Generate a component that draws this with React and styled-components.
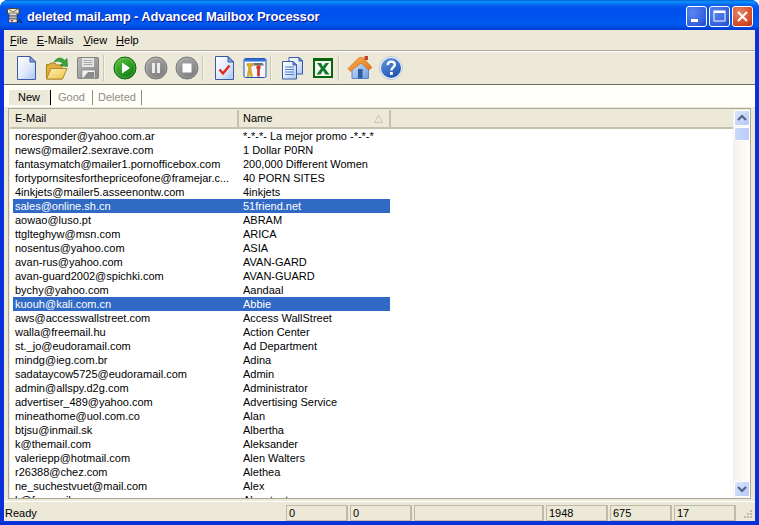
import React from 'react';
import styled, { createGlobalStyle } from 'styled-components';

const Global = createGlobalStyle`
  html, body { margin: 0; padding: 0; background: #fff; overflow: hidden; }
  * { box-sizing: border-box; }
`;

const UI = `"Liberation Sans", Arial, sans-serif`;

const Win = styled.div`
  width: 759px; height: 525px; display: flex; flex-direction: column;
  border-radius: 8px 8px 0 0; overflow: hidden; font: 11px/14px ${UI}; color: #000;
  background: #0831d9;
`;
const TitleBar = styled.div`
  height: 30px; flex: none; display: flex; align-items: center; padding: 0 6px 0 6px;
  background: linear-gradient(180deg, #0a5fd8 0, #0997ff 2px, #0b6cf0 4px, #0053ee 8px, #0050ee 16px, #0058f2 22px, #0055e6 26px, #003dd7 29px, #0a3cc8 30px);
`;
const TitleIcon = styled.svg` width: 17px; height: 17px; flex: none; margin: 1px 4px 0 0; `;
const TitleText = styled.div`
  flex: 1; color: #fff; font: bold 13px/16px "Liberation Sans", sans-serif; letter-spacing: -0.12px;
  text-shadow: 1px 1px 0 #0f1089; margin-top: 4px;
`;
const CtlRow = styled.div` display: flex; gap: 2px; margin-top: 2px; `;
const Ctl = styled.div`
  width: 21px; height: 21px; border: 1px solid #fff; border-radius: 3px; display: flex; align-items: center; justify-content: center;
  background: ${p => p.$close
    ? 'radial-gradient(circle at 35% 30%, #e58a6c 0, #d9562f 55%, #bf3010 100%)'
    : 'radial-gradient(circle at 30% 30%, #5a86ee 0, #3a68e2 55%, #2148c8 100%)'};
`;
const Body = styled.div`
  flex: 1; min-height: 0; display: flex; flex-direction: column; background: #ece9d8;
  margin: 0 4px 4px 4px;
`;
const MenuBar = styled.div`
  flex: none; display: flex; padding: 0 0 0 1px; align-items: center;
  border-bottom: 1px solid #aca899; height: 21px;
`;
const MenuItem = styled.div` padding: 0 ${p => p.$pad}px 0 5px; & u { text-decoration: underline; } `;
const Toolbar = styled.div`
  height: 34px; flex: none; display: flex; align-items: center; padding: 0 0 1px 6px;
  border-top: 1px solid #fff; border-bottom: 1px solid #716f64;
`;
const ToolBtn = styled.div` width: 31px; height: 26px; display: flex; align-items: center; justify-content: center; flex: none; `;
const Sep = styled.div` width: 2px; height: 26px; background: #c9c6b5; border-right: 1px solid #f6f5ee; margin-right: 4px; flex: none; `;
const TabStrip = styled.div`
  height: 22px; flex: none; background: #fffff8; display: flex; align-items: flex-end; padding: 0 0 2px 5px;
  border-top: 1px solid #fff;
`;
const Tab = styled.div`
  height: 15px; line-height: 15px; display: flex; align-items: center; padding-left: ${p => p.$pl}px;
  width: ${p => p.$w}px; background: ${p => p.$active ? '#ece9d8' : 'transparent'};
  color: ${p => p.$active ? '#000' : '#8e8e84'};
  border-right: 1px solid ${p => p.$active ? '#000' : '#8e8e84'};
`;
const Frame = styled.div`
  flex: 1; min-height: 0; margin: 1px 4px 0 4px; border: 1px solid #aca899;
  padding: 1px 0 0 1px; display: flex; background: #ece9d8;
`;
const ListCol = styled.div` flex: 1; min-width: 0; display: flex; flex-direction: column; background: #fff; `;
const Header = styled.div`
  height: 19px; flex: none; display: flex; background: #ece9d8; border-bottom: 2px solid #c4c1b0;
`;
const HeadCell = styled.div`
  position: relative; width: ${p => p.$w}px; padding-left: ${p => p.$pl}px; line-height: 17px; flex: none;
  border-right: 2px solid #c4c1b0;
`;
const SortMark = styled.svg` position: absolute; right: 6px; top: 4px; width: 9px; height: 9px; `;
const Rows = styled.div` flex: 1; min-height: 0; overflow: hidden; padding: 0 0 0 3px; `;
const Row = styled.div`
  display: flex; width: 377px; height: 14px; line-height: 14px; white-space: nowrap;
  background: ${p => p.$sel ? '#316ac5' : 'transparent'}; color: ${p => p.$sel ? '#fff' : '#000'};
`;
const Email = styled.div` width: 226px; padding-left: 2px; flex: none; overflow: hidden; `;
const Name = styled.div` width: 151px; padding-left: 4px; flex: none; overflow: hidden; `;
const Scroll = styled.div`
  width: 17px; flex: none; display: flex; flex-direction: column; padding-bottom: 1px;
  background: linear-gradient(90deg, #f3f1ec 0, #fefefb 100%);
`;
const ScrollBtn = styled.div`
  width: 16px; height: 16px; flex: none; border: 1px solid #fff; border-radius: 2px; background: linear-gradient(135deg, #dbe5fb, #b5c8f7);
  display: flex; align-items: center; justify-content: center; margin-left: 1px;
`;
const Thumb = styled.div`
  width: 16px; height: 14px; margin: 1px 0 0 1px; border: 1px solid #fff; border-radius: 2px; flex: none;
  background: linear-gradient(90deg, #c9d8fb, #b8ccf8);
`;
const Spacer = styled.div` flex: 1; `;
const Status = styled.div`
  height: 20px; flex: none; margin-top: 2px; display: flex; align-items: flex-start; padding-top: 3px; padding-left: 1px; border-top: 1px solid #fff;
`;
const Ready = styled.div` flex: 1; line-height: 15px; padding-top: 1px; `;
const Pane = styled.div`
  width: ${p => p.$w}px; height: 16px; margin-right: 2px; border: 1px solid #bdbaa8; border-right-width: 2px; padding-left: 2px; line-height: 14px; flex: none;
`;
const Grip = styled.svg` width: 17px; height: 16px; flex: none; `;

const data = [
  ['noresponder@yahoo.com.ar', '*-*-*- La mejor promo -*-*-*'],
  ['news@mailer2.sexrave.com', '1 Dollar P0RN'],
  ['fantasymatch@mailer1.pornofficebox.com', '200,000 Different Women'],
  ['fortypornsitesforthepriceofone@framejar.c...', '40 PORN SITES'],
  ['4inkjets@mailer5.asseenontw.com', '4inkjets'],
  ['sales@online.sh.cn', '51friend.net', 1],
  ['aowao@luso.pt', 'ABRAM'],
  ['ttglteghyw@msn.com', 'ARICA'],
  ['nosentus@yahoo.com', 'ASIA'],
  ['avan-rus@yahoo.com', 'AVAN-GARD'],
  ['avan-guard2002@spichki.com', 'AVAN-GUARD'],
  ['bychy@yahoo.com', 'Aandaal'],
  ['kuouh@kali.com.cn', 'Abbie', 1],
  ['aws@accesswallstreet.com', 'Access WallStreet'],
  ['walla@freemail.hu', 'Action Center'],
  ['st._jo@eudoramail.com', 'Ad Department'],
  ['mindg@ieg.com.br', 'Adina'],
  ['sadataycow5725@eudoramail.com', 'Admin'],
  ['admin@allspy.d2g.com', 'Administrator'],
  ['advertiser_489@yahoo.com', 'Advertising Service'],
  ['mineathome@uol.com.co', 'Alan'],
  ['btjsu@inmail.sk', 'Albertha'],
  ['k@themail.com', 'Aleksander'],
  ['valeriepp@hotmail.com', 'Alen Walters'],
  ['r26388@chez.com', 'Alethea'],
  ['ne_suchestvuet@mail.com', 'Alex'],
  ['k@freemail.com', 'Alexstant'],
];

const Ico = styled.svg` width: 26px; height: 26px; display: block; overflow: visible; `;

const Defs = () => (
  <svg width="0" height="0" style={{ position: 'absolute' }}>
    <defs>
      <linearGradient id="page" x1="0" y1="0" x2="1" y2="1"><stop offset="0" stopColor="#fff" /><stop offset="0.55" stopColor="#dfe9fb" /><stop offset="1" stopColor="#a9c4f2" /></linearGradient>
      <linearGradient id="green" x1="0.2" y1="0" x2="0.8" y2="1"><stop offset="0" stopColor="#58c03a" /><stop offset="1" stopColor="#0c7a10" /></linearGradient>
      <linearGradient id="gray" x1="0.2" y1="0" x2="0.8" y2="1"><stop offset="0" stopColor="#a8a8a8" /><stop offset="1" stopColor="#7a7a7a" /></linearGradient>
      <linearGradient id="blue" x1="0.2" y1="0" x2="0.8" y2="1"><stop offset="0" stopColor="#5d90dc" /><stop offset="1" stopColor="#1c4fae" /></linearGradient>
      <linearGradient id="folder" x1="0" y1="0" x2="1" y2="1"><stop offset="0" stopColor="#fff3b8" /><stop offset="1" stopColor="#f0c044" /></linearGradient>
      <linearGradient id="floppy" x1="0" y1="0" x2="1" y2="1"><stop offset="0" stopColor="#b8b8b8" /><stop offset="1" stopColor="#8a8a8a" /></linearGradient>
      <linearGradient id="roof" x1="0" y1="0" x2="1" y2="1"><stop offset="0" stopColor="#f7b24a" /><stop offset="1" stopColor="#e5701c" /></linearGradient>
      <linearGradient id="wall" x1="0" y1="0" x2="1" y2="1"><stop offset="0" stopColor="#d6e6fa" /><stop offset="1" stopColor="#6e9ddf" /></linearGradient>
    </defs>
  </svg>
);

const Page = () => (
  <>
    <path d="M4.5 1.5H17L22.5 7V24.5H4.5Z" fill="url(#page)" stroke="#3a5aa8" />
    <path d="M17 1.5V7H22.5Z" fill="#7fa4e4" stroke="#3a5aa8" />
  </>
);
const NewIcon = () => <Ico viewBox="0 0 26 26"><Page /></Ico>;
const OpenIcon = () => (
  <Ico viewBox="0 0 26 26">
    <path d="M2.5 24V9.5H5L6.5 8H11L12.5 10H18V24Z" fill="#e3ae3c" stroke="#a77f22" />
    <path d="M2.5 24L7 13.5H23L18.5 24Z" fill="url(#folder)" stroke="#b08a2c" />
    <path d="M10 7C13 2 18 2 20.5 5.5L23 3.5L23.5 11.5L16 10.5L18.5 8.5C16.5 6 13.5 5.5 10 7Z" fill="#3aa53a" stroke="#1f7a24" strokeWidth="0.6" />
  </Ico>
);
const SaveIcon = () => (
  <Ico viewBox="0 0 26 26">
    <rect x="2.5" y="2.5" width="21" height="21" rx="1" fill="url(#floppy)" stroke="#828282" />
    <rect x="7" y="3" width="12" height="9" fill="#e6e6e6" />
    <path d="M8.5 5.5H17.5M8.5 7.5H17.5M8.5 9.5H17.5" stroke="#a9a9a9" />
    <rect x="7" y="15" width="13" height="8.5" fill="#f2f2f2" stroke="#7d7d7d" strokeWidth="0.6" />
    <path d="M8 23L13 17H19V23Z" fill="#8b8b8b" />
  </Ico>
);
const Disc = ({ fill, children }) => (
  <Ico viewBox="0 0 26 26">
    <circle cx="13" cy="13" r="11" fill={fill} stroke={fill === 'url(#green)' ? '#0a6a10' : '#7a7a7a'} />
    <circle cx="13" cy="13" r="9.6" fill="none" stroke="#fff" strokeOpacity="0.18" />
    {children}
  </Ico>
);
const PlayIcon = () => <Disc fill="url(#green)"><path d="M10 7.5L18 13L10 18.5Z" fill="#fff" /></Disc>;
const PauseIcon = () => <Disc fill="url(#gray)"><rect x="9" y="8" width="3" height="10" fill="#ececec" /><rect x="14" y="8" width="3" height="10" fill="#ececec" /></Disc>;
const StopIcon = () => <Disc fill="url(#gray)"><rect x="8.5" y="8.5" width="9" height="9" fill="#fff" /></Disc>;
const CheckIcon = () => (
  <Ico viewBox="0 0 26 26">
    <Page />
    <path d="M8.5 14.5L12 18.5L18.5 10.5" fill="none" stroke="#e02a18" strokeWidth="2.4" />
  </Ico>
);
const ToolsIcon = () => (
  <Ico viewBox="0 0 26 26">
    <rect x="2" y="3.5" width="22" height="19" rx="1.5" fill="#f4f7fd" stroke="#1f56b0" />
    <rect x="2.5" y="4" width="21" height="2.5" fill="#2f6fd6" />
    <path d="M5 8.5H11V11H9V14L10.5 21.5H8.5L7.8 16.5L7 21.5H5L6.5 14V11H5Z" fill="#e0ae1c" stroke="#a67c10" strokeWidth="0.4" />
    <path d="M11.5 8H20.5L22 10.5H11.5Z" fill="#707070" />
    <path d="M14.5 10.5H18.5V14H17.8V21.5H15.2V14H14.5Z" fill="#d8321c" />
  </Ico>
);
const CopyIcon = () => (
  <Ico viewBox="0 0 26 26">
    <path d="M10 2.5H20L23.5 6V19H10Z" fill="url(#page)" stroke="#3a5aa8" />
    <path d="M20 2.5V6H23.5Z" fill="#7fa4e4" stroke="#3a5aa8" />
    <path d="M3.5 6.5H14L17.5 10V24H3.5Z" fill="url(#page)" stroke="#3a5aa8" />
    <path d="M14 6.5V10H17.5Z" fill="#7fa4e4" stroke="#3a5aa8" />
    <path d="M6 12H15M6 14.5H15M6 17H15M6 19.5H15" stroke="#4a80d4" strokeWidth="1.2" />
  </Ico>
);
const ExcelIcon = () => (
  <Ico viewBox="0 0 26 26">
    <rect x="3" y="3" width="20" height="20" fill="#0a640a" />
    <rect x="5" y="6" width="16" height="15" fill="#f4f7f2" />
    <path d="M7 8H11L13 11.5L15.5 8H19L15 13.5L19.5 19.5H15.5L13 15.5L10.5 19.5H6.5L11 13.5Z" fill="#127a27" />
  </Ico>
);
const HomeIcon = () => (
  <Ico viewBox="0 0 26 26">
    <path d="M5 12V23.5H21.5V12L13 5Z" fill="url(#wall)" stroke="#5f86c4" />
    <path d="M1 13.5L12 2.5H16L25 12.5L22 15L14 8L3.5 16.5Z" fill="url(#roof)" stroke="#c86a1e" strokeWidth="0.6" />
    <rect x="17.5" y="1" width="3.5" height="4" fill="#c8402a" />
    <rect x="11" y="14" width="4.5" height="9.5" fill="#2f5d9c" />
  </Ico>
);
const HelpIcon = () => (
  <Ico viewBox="0 0 26 26">
    <circle cx="13" cy="13" r="11.5" fill="#eef3fb" stroke="#b9c6dc" />
    <circle cx="13" cy="13" r="10" fill="url(#blue)" />
    <path d="M9.6 10.2C9.8 7.6 11.4 6.6 13.2 6.6C15.4 6.6 16.8 8 16.8 9.8C16.8 12.2 13.4 12.6 13.4 15.4" fill="none" stroke="#fff" strokeWidth="2.4" />
    <rect x="12" y="17" width="2.8" height="2.8" fill="#fff" />
  </Ico>
);

const groups = [
  [<NewIcon />, <OpenIcon />, <SaveIcon />],
  [<PlayIcon />, <PauseIcon />, <StopIcon />],
  [<CheckIcon />, <ToolsIcon />],
  [<CopyIcon />, <ExcelIcon />],
  [<HomeIcon />, <HelpIcon />],
];

export default function App() {
  return (
    <>
      <Global />
      <Defs />
      <Win>
        <TitleBar>
          <TitleIcon viewBox="0 0 17 17">
            <path d="M1.5 1.5H13V7H1.5Z" fill="#f4efc8" stroke="#444" />
            <path d="M1.5 1.5L7 5L13 1.5" fill="none" stroke="#666" />
            <rect x="3" y="6" width="8" height="3" fill="#d9d9d9" stroke="#333" strokeWidth="0.6" />
            <rect x="3" y="9" width="8" height="3" fill="#bdbdbd" stroke="#333" strokeWidth="0.6" />
            <rect x="3" y="12" width="8" height="3.5" fill="#e6e6e6" stroke="#333" strokeWidth="0.6" />
            <rect x="5" y="13" width="2" height="1.5" fill="#c42020" />
            <path d="M11 14h1.4v1.4H11ZM13 12h1.4v1.4H13ZM14.5 14.5h1.4v1.4H14.5Z" fill="#111" />
          </TitleIcon>
          <TitleText>deleted mail.amp - Advanced Mailbox Processor</TitleText>
          <CtlRow>
            <Ctl>
              <svg width="19" height="19" viewBox="0 0 19 19"><rect x="4" y="12" width="7" height="3" fill="#fff" /></svg>
            </Ctl>
            <Ctl>
              <svg width="19" height="19" viewBox="0 0 19 19"><rect x="4" y="4" width="11" height="10" fill="none" stroke="#fff" /><rect x="4" y="4" width="11" height="2" fill="#fff" /></svg>
            </Ctl>
            <Ctl $close>
              <svg width="19" height="19" viewBox="0 0 19 19"><path d="M5 5L14 14M14 5L5 14" stroke="#fff" strokeWidth="2" /></svg>
            </Ctl>
          </CtlRow>
        </TitleBar>
        <Body>
          <MenuBar>
            <MenuItem $pad={4}><u>F</u>ile</MenuItem>
            <MenuItem $pad={5}><u>E</u>-Mails</MenuItem>
            <MenuItem $pad={4}><u>V</u>iew</MenuItem>
            <MenuItem $pad={5}><u>H</u>elp</MenuItem>
          </MenuBar>
          <Toolbar>
            {groups.map((g, i) => (
              <React.Fragment key={i}>
                {g.map((ic, j) => <ToolBtn key={j}>{ic}</ToolBtn>)}
                {i < groups.length - 1 && <Sep />}
              </React.Fragment>
            ))}
          </Toolbar>
          <TabStrip>
            <Tab $active $w={42} $pl={9}>New</Tab>
            <Tab $w={42} $pl={7}>Good</Tab>
            <Tab $w={49} $pl={5}>Deleted</Tab>
          </TabStrip>
          <Frame>
            <ListCol>
              <Header>
                <HeadCell $w={229} $pl={5}>E-Mail</HeadCell>
                <HeadCell $w={152} $pl={4}>
                  Name
                  <SortMark viewBox="0 0 9 9"><path d="M4.5 1L8.5 8.5H0.5Z" fill="none" stroke="#c8c5b4" /></SortMark>
                </HeadCell>
              </Header>
              <Rows>
                {data.map(([e, n, s]) => (
                  <Row key={e + n} $sel={!!s}><Email>{e}</Email><Name>{n}</Name></Row>
                ))}
              </Rows>
            </ListCol>
            <Scroll>
              <ScrollBtn>
                <svg width="10" height="8" viewBox="0 0 10 8"><path d="M1 6L5 2L9 6" fill="none" stroke="#4d6185" strokeWidth="2" /></svg>
              </ScrollBtn>
              <Thumb />
              <Spacer />
              <ScrollBtn>
                <svg width="10" height="8" viewBox="0 0 10 8"><path d="M1 2L5 6L9 2" fill="none" stroke="#4d6185" strokeWidth="2" /></svg>
              </ScrollBtn>
            </Scroll>
          </Frame>
          <Status>
            <Ready>Ready</Ready>
            <Pane $w={62}>0</Pane>
            <Pane $w={62}>0</Pane>
            <Pane $w={130}></Pane>
            <Pane $w={62}>1948</Pane>
            <Pane $w={62}>675</Pane>
            <Pane $w={62}>17</Pane>
            <Grip viewBox="0 0 17 16">
              <path d="M12 5h2v2h-2ZM9 8h2v2H9ZM12 8h2v2h-2ZM6 11h2v2H6ZM9 11h2v2H9ZM12 11h2v2h-2Z" fill="#bdbaa8" />
            </Grip>
          </Status>
        </Body>
      </Win>
    </>
  );
}
